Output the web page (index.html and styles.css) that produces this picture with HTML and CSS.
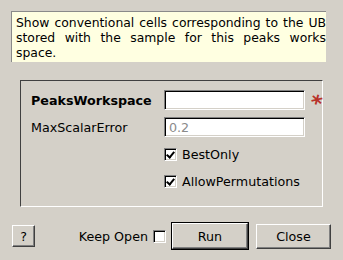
FILE: index.html
```html
<!DOCTYPE html>
<html lang="en">
<head>
    <meta charset="UTF-8">
    <title>Find UB using lattice parameters</title>
    <link rel="stylesheet" href="styles.css">
</head>
<body>
    <div class="dialog">
        <!-- algorithm description -->
        <div class="desc">Show conventional cells corresponding to the UB stored with the sample for this peaks works space.</div>

        <!-- properties -->
        <div class="props">
            <label class="prop-label bold" for="peaksWs">PeaksWorkspace</label>
            <input type="text" id="peaksWs" class="field">
            <span class="required">*</span>

            <label class="prop-label" for="maxErr">MaxScalarError</label>
            <input type="text" id="maxErr" class="field" placeholder="0.2">
            <span></span>

            <span></span>
            <label class="check-row"><span class="box checked"></span>BestOnly</label>
            <span></span>

            <span></span>
            <label class="check-row"><span class="box checked"></span>AllowPermutations</label>
            <span></span>
        </div>

        <!-- buttons -->
        <div class="actions">
            <button class="btn help">?</button>
            <label class="keep-open">Keep Open <span class="box"></span></label>
            <button class="btn run">Run</button>
            <button class="btn close">Close</button>
        </div>
    </div>
</body>
</html>
```

FILE: styles.css
```css
body {
    margin: 0;
    background-color: #d4d0c8;
    font-family: 'DejaVu Sans', sans-serif;
    font-size: 12.7px;
    color: #000;
}

.dialog {
    width: 343px;
    height: 260px;
    padding: 11px 0 0 11px;
    box-sizing: border-box;
}

.desc {
    width: 315px;
    height: 51px;
    box-sizing: border-box;
    padding: 3px 0 0 4px;
    background: #ffffe1;
    border-top: 1px solid #8a8a8a;
    border-left: 1px solid #8a8a8a;
    font-size: 12.4px;
    line-height: 15px;
    text-align: justify;
}

.props {
    margin: 18px 0 0 9px;
    width: 303px;
    height: 127px;
    box-sizing: border-box;
    border-top: 1px solid #404040;
    border-left: 1px solid #404040;
    border-right: 1px solid #fff;
    border-bottom: 1px solid #fff;
    padding: 9px 0 0 10px;
    display: grid;
    grid-template-columns: 133px 141px auto;
    grid-auto-rows: 20px;
    row-gap: 7px;
    align-items: center;
}

.props .check-row {
    height: 13px;
}

.prop-label {
    white-space: nowrap;
}

.bold {
    font-weight: bold;
}

.field {
    width: 141px;
    height: 20px;
    box-sizing: border-box;
    margin: 0;
    padding: 0 4px;
    font: inherit;
    background: #fff;
    border: 1px solid;
    border-color: #808080 #fff #fff #808080;
    box-shadow: inset 1px 1px #000, inset -1px -1px #d4d0c8;
    outline: none;
}

.field::placeholder {
    color: #8a8a8a;
}

.required {
    color: #b8322a;
    font-size: 22px;
    font-weight: bold;
    padding-left: 6px;
    padding-top: 6px;
    line-height: 20px;
    transform: rotate(15deg);
    display: inline-block;
}

.check-row {
    display: flex;
    align-items: center;
    gap: 5px;
    white-space: nowrap;
}

.box {
    width: 13px;
    height: 13px;
    box-sizing: border-box;
    background: #fff;
    border: 1px solid;
    border-color: #808080 #fff #fff #808080;
    box-shadow: inset 1px 1px #000, inset -1px -1px #d4d0c8;
    display: inline-block;
    position: relative;
}

.box.checked::after {
    content: '';
    position: absolute;
    left: 3px;
    top: 1px;
    width: 3px;
    height: 6px;
    border: solid #000;
    border-width: 0 2px 2px 0;
    transform: rotate(40deg);
}

.actions {
    display: flex;
    align-items: center;
    margin-top: 16px;
    margin-left: 1px;
}

.btn {
    font: inherit;
    color: #000;
    background: #d4d0c8;
    border: 1px solid;
    border-color: #fff #404040 #404040 #fff;
    box-shadow: inset -1px -1px #808080;
    padding: 0;
    height: 24px;
}

.help {
    width: 23px;
    height: 22px;
}

.keep-open {
    display: flex;
    align-items: center;
    gap: 5px;
    margin-left: auto;
    margin-right: 6px;
}

.run {
    width: 76px;
    height: 26px;
    outline: 1px solid #000;
    outline-offset: 0;
    border-color: #fff #404040 #404040 #fff;
}

.close {
    width: 75px;
    height: 25px;
    margin: 0 12px 0 8px;
}
```
